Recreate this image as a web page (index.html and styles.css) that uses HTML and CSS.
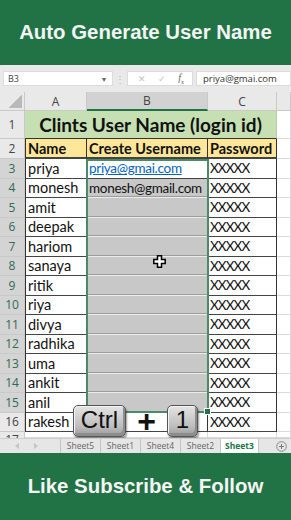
FILE: index.html
```html
<!DOCTYPE html>
<html lang="en">
  <head>
    <meta charset="UTF-8" />
    <meta name="viewport" content="width=device-width, initial-scale=1.0" />
    <title>Auto Generate User Name</title>
    <link rel="stylesheet" href="styles.css">
  </head>
  <body>
    <div class="banner banner-top">Auto Generate User Name</div>

    <div class="formula-bar">
      <div class="name-box"><span>B3</span><span class="caret">&#9662;</span></div>
      <span class="grip">&#8942;</span>
      <div class="fx-box">
        <span class="dim">&#10005;</span>
        <span class="dim">&#10003;</span>
        <span class="fx"><i>f</i><sub>x</sub></span>
      </div>
      <div class="formula">priya@gmai.com</div>
    </div>

    <div class="sheet">
      <!-- column headers -->
      <div class="row row-head">
        <div class="cell c-h corner"><span class="tri"></span></div>
        <div class="cell c-a hd">A</div>
        <div class="cell c-b hd hd-sel">B</div>
        <div class="cell c-c hd">C</div>
        <div class="cell c-x hd"></div>
      </div>
      <!-- row 1 -->
      <div class="row row-1">
        <div class="cell c-h rh">1</div>
        <div class="cell merged">Clints User Name (login id)</div>
        <div class="cell c-x"></div>
      </div>
      <!-- row 2 -->
      <div class="row row-2">
        <div class="cell c-h rh">2</div>
        <div class="cell c-a t th">Name</div>
        <div class="cell c-b t th">Create Username</div>
        <div class="cell c-c t th">Password</div>
        <div class="cell c-x"></div>
      </div>
      <div class="row">
        <div class="cell c-h rh sel">3</div>
        <div class="cell c-a t">priya</div>
        <div class="cell c-b t"><span class="link mail">priya@gmai.com</span></div>
        <div class="cell c-c t pw">XXXXX</div>
        <div class="cell c-x"></div>
      </div>
      <div class="row">
        <div class="cell c-h rh sel">4</div>
        <div class="cell c-a t">monesh</div>
        <div class="cell c-b t grey"><span class="mail">monesh@gmail.com</span></div>
        <div class="cell c-c t pw">XXXXX</div>
        <div class="cell c-x"></div>
      </div>
      <div class="row">
        <div class="cell c-h rh sel">5</div>
        <div class="cell c-a t">amit</div>
        <div class="cell c-b t grey"></div>
        <div class="cell c-c t pw">XXXXX</div>
        <div class="cell c-x"></div>
      </div>
      <div class="row">
        <div class="cell c-h rh sel">6</div>
        <div class="cell c-a t">deepak</div>
        <div class="cell c-b t grey"></div>
        <div class="cell c-c t pw">XXXXX</div>
        <div class="cell c-x"></div>
      </div>
      <div class="row">
        <div class="cell c-h rh sel">7</div>
        <div class="cell c-a t">hariom</div>
        <div class="cell c-b t grey"></div>
        <div class="cell c-c t pw">XXXXX</div>
        <div class="cell c-x"></div>
      </div>
      <div class="row">
        <div class="cell c-h rh sel">8</div>
        <div class="cell c-a t">sanaya</div>
        <div class="cell c-b t grey"></div>
        <div class="cell c-c t pw">XXXXX</div>
        <div class="cell c-x"></div>
      </div>
      <div class="row">
        <div class="cell c-h rh sel">9</div>
        <div class="cell c-a t">ritik</div>
        <div class="cell c-b t grey"></div>
        <div class="cell c-c t pw">XXXXX</div>
        <div class="cell c-x"></div>
      </div>
      <div class="row">
        <div class="cell c-h rh sel">10</div>
        <div class="cell c-a t">riya</div>
        <div class="cell c-b t grey"></div>
        <div class="cell c-c t pw">XXXXX</div>
        <div class="cell c-x"></div>
      </div>
      <div class="row">
        <div class="cell c-h rh sel">11</div>
        <div class="cell c-a t">divya</div>
        <div class="cell c-b t grey"></div>
        <div class="cell c-c t pw">XXXXX</div>
        <div class="cell c-x"></div>
      </div>
      <div class="row">
        <div class="cell c-h rh sel">12</div>
        <div class="cell c-a t">radhika</div>
        <div class="cell c-b t grey"></div>
        <div class="cell c-c t pw">XXXXX</div>
        <div class="cell c-x"></div>
      </div>
      <div class="row">
        <div class="cell c-h rh sel">13</div>
        <div class="cell c-a t">uma</div>
        <div class="cell c-b t grey"></div>
        <div class="cell c-c t pw">XXXXX</div>
        <div class="cell c-x"></div>
      </div>
      <div class="row">
        <div class="cell c-h rh sel">14</div>
        <div class="cell c-a t">ankit</div>
        <div class="cell c-b t grey"></div>
        <div class="cell c-c t pw">XXXXX</div>
        <div class="cell c-x"></div>
      </div>
      <div class="row">
        <div class="cell c-h rh sel">15</div>
        <div class="cell c-a t">anil</div>
        <div class="cell c-b t grey"></div>
        <div class="cell c-c t pw">XXXXX</div>
        <div class="cell c-x"></div>
      </div>
      <div class="row">
        <div class="cell c-h rh">16</div>
        <div class="cell c-a t">rakesh</div>
        <div class="cell c-b t"></div>
        <div class="cell c-c t pw">XXXXX</div>
        <div class="cell c-x"></div>
      </div>
      <div class="row row-17">
        <div class="cell c-h rh rh-cut"><span>17</span></div>
        <div class="cell c-a"></div>
        <div class="cell c-b"></div>
        <div class="cell c-c"></div>
        <div class="cell c-x"></div>
      </div>

      <!-- selection B3:B15 -->
      <div class="selection"><span class="handle"></span></div>

      <svg class="cursor" width="13" height="13" viewBox="0 0 13 13">
        <polygon points="4.5,0.8 8.5,0.8 8.5,4.5 12.2,4.5 12.2,8.5 8.5,8.5 8.5,12.2 4.5,12.2 4.5,8.5 0.8,8.5 0.8,4.5 4.5,4.5" fill="#fff" stroke="#000" stroke-width="1.5" />
      </svg>

      <!-- shortcut overlay -->
      <div class="shortcut">
        <span class="key key-ctrl">Ctrl</span>
        <span class="plus">+</span>
        <span class="key key-one">1</span>
      </div>
    </div>

    <div class="tabs">
      <div class="tab-nav">
        <svg width="5" height="6" viewBox="0 0 5 6"><polygon points="4,0 4,6 0,3" fill="#c4c4c4" /></svg>
        <svg width="5" height="6" viewBox="0 0 5 6"><polygon points="1,0 1,6 5,3" fill="#c4c4c4" /></svg>
      </div>
      <div class="tab">Sheet5</div>
      <div class="tab">Sheet1</div>
      <div class="tab">Sheet4</div>
      <div class="tab">Sheet2</div>
      <div class="tab active">Sheet3</div>
      <div class="tab-fill">
        <svg width="11" height="11" viewBox="0 0 11 11">
          <circle cx="5.5" cy="5.5" r="4.8" fill="none" stroke="#888" stroke-width="1" />
          <path d="M5.5 3v5M3 5.5h5" stroke="#777" stroke-width="1" />
        </svg>
      </div>
    </div>

    <div class="banner banner-bottom">Like Subscribe &amp; Follow</div>
  </body>
</html>
```

FILE: styles.css
```css
body {
  margin: 0;
  width: 291px;
  height: 520px;
  overflow: hidden;
  font-family: Lato, "Open Sans", sans-serif;
  background: #fff;
}
.banner {
  background-color: #217346;
  color: #f4f4f4;
  font-family: "Liberation Sans", Arial, sans-serif;
  font-weight: bold;
  font-size: 20.4px;
  display: flex;
  justify-content: center;
  align-items: center;
}
.banner-top {
  height: 65px;
}
.banner-bottom {
  height: 67px;
}

/* formula bar */
.formula-bar {
  height: 27px;
  background: #e9e9e9;
  display: flex;
  align-items: center;
  padding-left: 3px;
  font-family: "Open Sans", sans-serif;
  font-size: 9px;
  color: #444;
}
.name-box {
  width: 110px;
  height: 15px;
  background: #fff;
  border: 1px solid #dcdcdc;
  box-sizing: border-box;
  display: flex;
  align-items: center;
  justify-content: space-between;
  padding: 0 6px 0 4px;
}
.caret {
  font-size: 8px;
  color: #666;
}
.grip {
  width: 14px;
  text-align: center;
  color: #b5b5b5;
  font-size: 10px;
}
.fx-box {
  width: 66px;
  height: 15px;
  background: #fff;
  border: 1px solid #dcdcdc;
  box-sizing: border-box;
  display: flex;
  align-items: center;
  justify-content: space-around;
  padding: 0 2px 0 4px;
}
.dim {
  color: #c4c4c4;
  font-size: 9px;
}
.fx {
  font-family: "Liberation Serif", serif;
  color: #666;
  font-size: 10px;
}
.fx sub {
  font-size: 6px;
}
.formula {
  flex: 1;
  height: 15px;
  margin-left: 3px;
  background: #fff;
  border: 1px solid #dcdcdc;
  box-sizing: border-box;
  padding-left: 6px;
  display: flex;
  align-items: center;
  font-size: 9.5px;
  color: #333;
}

/* sheet grid */
.sheet {
  position: relative;
  height: 346px;
  overflow: hidden;
  font-size: 14.5px;
  color: #111;
}
.row {
  display: flex;
  height: 19.5px;
}
.row-head {
  height: 19px;
}
.row-1 {
  height: 28px;
}
.row-2 {
  height: 20px;
}
.row-17 {
  height: 6px;
}
.cell {
  box-sizing: border-box;
  border-right: 1px solid #dadada;
  border-bottom: 1px solid #dadada;
  display: flex;
  align-items: center;
  padding-left: 2px;
  white-space: nowrap;
  overflow: hidden;
}
.c-h {
  width: 25px;
}
.c-a {
  width: 62px;
}
.c-b {
  width: 121px;
}
.c-c {
  width: 69px;
}
.c-x {
  flex: 1;
}
.hd,
.corner {
  background: #e9e9e9;
  border-color: #c9c9c9;
  justify-content: center;
  padding: 0;
  font-family: "Open Sans", sans-serif;
  font-size: 12px;
  color: #444;
}
.hd-sel {
  background: #d2d2d2;
  border-bottom: 2px solid #217346;
}
.corner {
  position: relative;
}
.tri {
  position: absolute;
  right: 2px;
  bottom: 2px;
  width: 13px;
  height: 13px;
  background: linear-gradient(135deg, transparent 50%, #b9b9b9 50%);
}
.rh {
  background: #e9e9e9;
  border-color: #c9c9c9;
  justify-content: center;
  padding: 0;
  font-family: "Open Sans", sans-serif;
  font-size: 12px;
  color: #444;
}
.rh.sel {
  background: #d4d4d4;
  color: #2e6b52;
}
.rh-cut {
  align-items: flex-start;
  border-bottom: none;
}
.rh-cut span {
  line-height: 16px;
}
.merged {
  width: 252px;
  background: #c6e0b4;
  border-right: 1px solid #b8cca9;
  border-bottom: 1px solid #333;
  justify-content: center;
  padding: 0;
  font-weight: bold;
  font-size: 19px;
}
.t {
  border-right: 1px solid #333;
  border-bottom: 1px solid #444;
}
.c-a.t {
  border-left: 1px solid #333;
}
.th {
  background: #ffe699;
  font-weight: bold;
  border-bottom-width: 2px;
}
.grey {
  background: #c8c8c8;
  border-bottom: 1px solid #ececec;
  box-shadow: inset 0 -1px #9c9c9c;
}
.mail {
  font-size: 13.5px;
  letter-spacing: -0.3px;
}
.pw {
  font-size: 13.5px;
  letter-spacing: -0.9px;
}
.link {
  color: #0563c1;
  text-decoration: underline;
}
.selection {
  position: absolute;
  left: 86px;
  top: 67px;
  width: 123px;
  height: 254px;
  box-sizing: border-box;
  border: 2px solid #4a8a68;
  pointer-events: none;
}
.handle {
  position: absolute;
  right: -4px;
  bottom: -4px;
  width: 5px;
  height: 5px;
  background: #217346;
  border: 1px solid #fff;
}
.cursor {
  position: absolute;
  left: 153px;
  top: 163px;
}

/* Ctrl + 1 overlay */
.shortcut {
  position: absolute;
  left: 73px;
  top: 313px;
  height: 32px;
  display: flex;
  align-items: center;
  font-family: "Liberation Sans", Arial, sans-serif;
  color: #111;
}
.key {
  height: 32px;
  box-sizing: border-box;
  border: 1px solid #555;
  border-radius: 5px;
  background: linear-gradient(#e4e4e4, #bcbcbc 70%, #9a9a9a);
  box-shadow: inset 1px 1px 0 #f4f4f4, inset -2px -3px 0 #8d8d8d, 1px 2px 2px rgba(0, 0, 0, 0.4);
  display: flex;
  justify-content: center;
  align-items: center;
  font-size: 24px;
  padding-bottom: 2px;
}
.key-ctrl {
  width: 53px;
}
.key-one {
  width: 31px;
}
.plus {
  width: 41px;
  text-align: center;
  font-weight: bold;
  font-size: 32px;
  line-height: 32px;
}

/* sheet tabs */
.tabs {
  height: 15px;
  display: flex;
  background: #e6e6e6;
  border-top: 1px solid #cfcfcf;
  box-sizing: border-box;
  font-family: "Open Sans", sans-serif;
  font-size: 8.5px;
  line-height: 12px;
  color: #666;
}
.tab-nav {
  width: 60px;
  display: flex;
  gap: 13px;
  padding-left: 15px;
  box-sizing: border-box;
  align-items: center;
}
.tab {
  width: 40px;
  border-left: 1px solid #c4c4c4;
  box-sizing: border-box;
  display: flex;
  justify-content: center;
  align-items: center;
}
.tab.active {
  width: 39px;
  background: #fff;
  color: #217346;
  font-weight: bold;
  border-right: 1px solid #c4c4c4;
}
.tab-fill {
  flex: 1;
  display: flex;
  justify-content: flex-end;
  align-items: center;
  padding-right: 4px;
}
```
